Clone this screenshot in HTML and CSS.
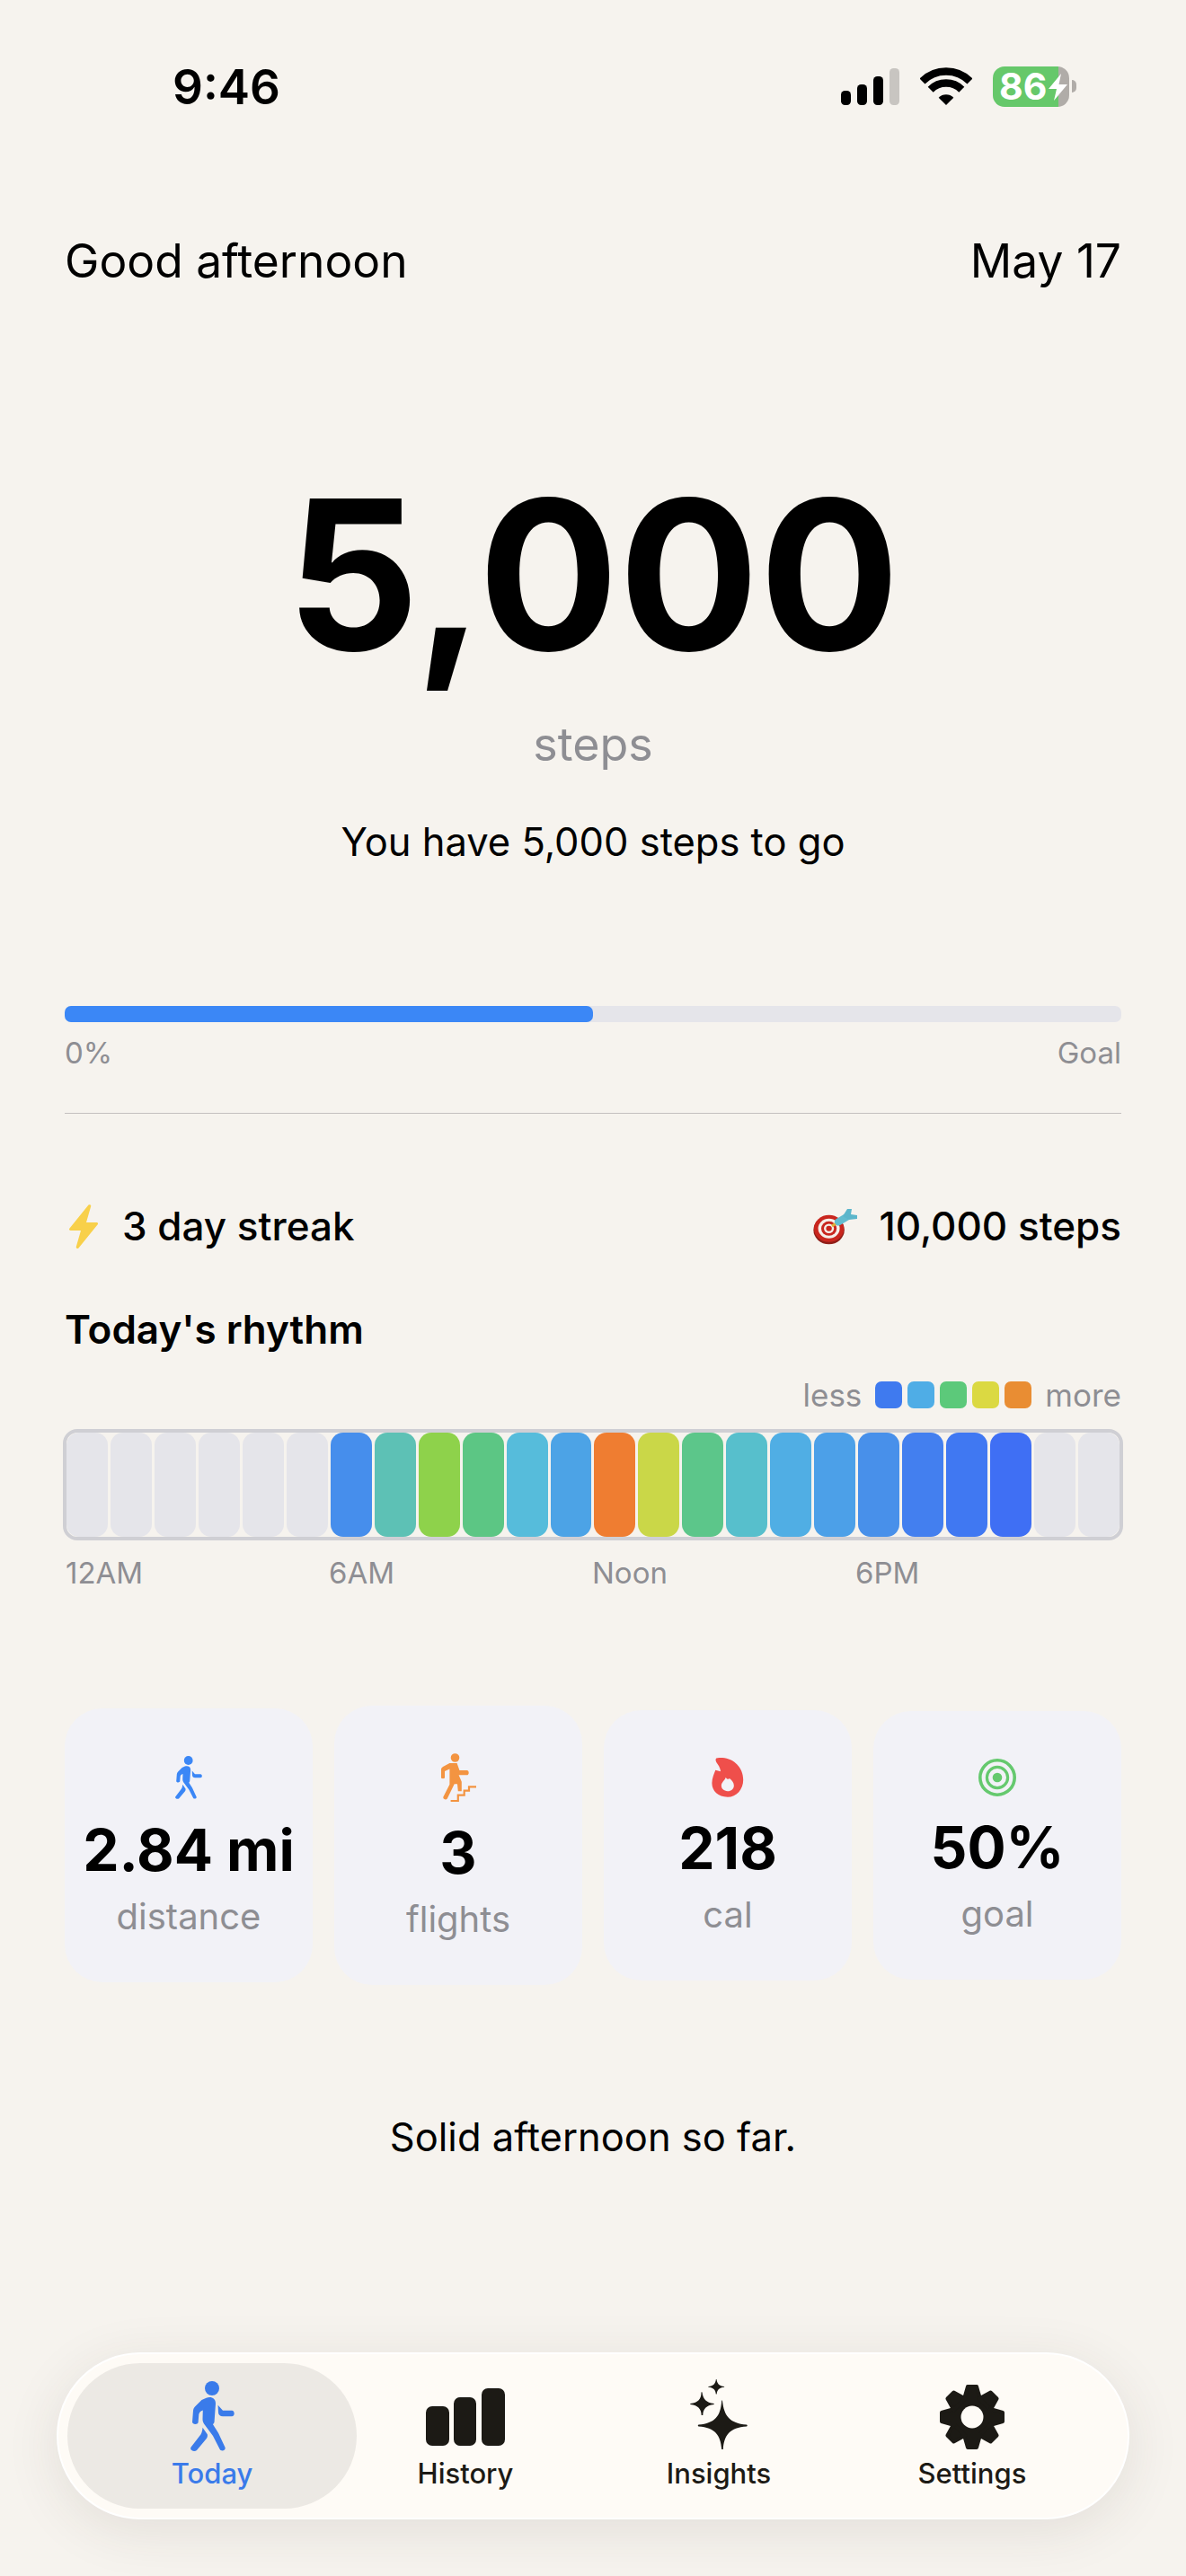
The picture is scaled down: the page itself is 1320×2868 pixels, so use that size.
FILE: index.html
```html
<!DOCTYPE html>
<html>

<head>
    <title>Today</title>
    <meta charset="UTF-8">

    <link rel="stylesheet" href="styles.css">

</head>

<body>
    <svg class="sprites" width="0" height="0">
        <defs>
            <symbol id="walker" viewBox="0 0 49 78">
                <ellipse cx="24" cy="8" rx="8" ry="8" />
                <path d="M17.600 18.700C23 17 28 19 28 25L26.500 46L25 48.300L31 57.700L38.600 74C39.600 77.500 34 78.600 32.700 76L25 61L15 47.500C13.800 45.500 13.500 44 13.500 42L13.800 32.500C11 33 10 35 9.300 37L8.600 46C8.200 48.600 2 48.600 2 45.500L3 33C3.200 31 4 29.600 5.200 28.300L12.500 21Z" />
                <path d="M30.600 26.700L36 32.700H46C49.600 32.800 49.600 39.300 46 39.300H36C33 39.300 31 37.500 31 35Z" />
                <path d="M13.500 51.700L18.800 59.300C19.200 61 18.800 63 17.600 64.300L7 77C4 79.400 -1.600 76.600 .6 73.600L11.400 59.500C12.800 57 13.300 54.500 13.500 51.700Z" />
            </symbol>
        </defs>
    </svg>

    <div class="page">
        <div class="status-bar">
            <span class="clock">9:46</span>
            <div class="status-icons">
                <svg class="signal" width="65" height="41" viewBox="0 0 65 41">
                    <rect x="0" y="25" width="11" height="16" rx="4.500" fill="#000" />
                    <rect x="18" y="18" width="11" height="23" rx="4.500" fill="#000" />
                    <rect x="36" y="9" width="11" height="32" rx="4.500" fill="#000" />
                    <rect x="54" y="0" width="11" height="41" rx="4.500" fill="#c8c5c1" />
                </svg>
                <svg class="wifi" width="58" height="42" viewBox="0 0 58 42">
                    <path d="M2.500 15.500A37.500 37.500 0 0 1 55.500 15.500" fill="none" stroke="#000" stroke-width="8.500" />
                    <path d="M11.700 24.700A24.500 24.500 0 0 1 46.300 24.700" fill="none" stroke="#000" stroke-width="8.500" />
                    <path d="M29 42L20.700 33.700A11.700 11.700 0 0 1 37.300 33.700Z" fill="#000" />
                </svg>
                <div class="battery">
                    <span class="battery-num">86</span>
                    <svg width="21" height="30" viewBox="0 0 21 30">
                        <path d="M14 0L0 17H9L6 30L21 12H11.500Z" fill="#fff" />
                    </svg>
                </div>
                <div class="battery-cap"></div>
            </div>
        </div>

        <div class="top-row">
            <span>Good afternoon</span>
            <span>May 17</span>
        </div>

        <div class="hero">
            <div class="hero-num">5,000</div>
            <div class="hero-unit">steps</div>
            <div class="hero-left">You have 5,000 steps to go</div>
        </div>

        <div class="progress">
            <div class="progress-track">
                <div class="progress-fill" style="width: 50%"></div>
            </div>
            <div class="progress-labels">
                <span>0%</span>
                <span>Goal</span>
            </div>
        </div>

        <div class="divider"></div>

        <div class="streak-row">
            <div class="streak-item">
                <svg class="bolt" width="32" height="49" viewBox="0 0 32 49">
                    <path d="M21.500 .6C22.800 -.4 24.600 .4 24.200 2L19 20H30.500C32 20 32.500 21.600 31.500 22.600L10.500 48.400C9.200 49.600 7.400 48.800 7.800 47L13 29H1.500C0 29 -.5 27.400 .5 26.400Z" fill="#f8d04a" />
                </svg>
                <span>3 day streak</span>
            </div>
            <div class="streak-item">
                <svg class="dart" width="50" height="41" viewBox="0 0 50 41">
                    <ellipse cx="17.600" cy="24.600" rx="17.200" ry="15.600" fill="#8f1d17" />
                    <ellipse cx="17.600" cy="22.800" rx="16.600" ry="15" fill="#c9261e" />
                    <ellipse cx="17.600" cy="22.800" rx="12" ry="11" fill="#f6efe9" />
                    <ellipse cx="17.600" cy="22.800" rx="8.600" ry="8" fill="#c9261e" />
                    <ellipse cx="17.600" cy="22.800" rx="5.600" ry="5.200" fill="#f6efe9" />
                    <ellipse cx="17.600" cy="22.800" rx="3.200" ry="3" fill="#c9261e" />
                    <path d="M21 20L28 15.500" stroke="#e3b23a" stroke-width="3" />
                    <path d="M28 15.500L38 9.500" stroke="#63bccf" stroke-width="8" stroke-linecap="round" />
                    <path d="M33 9L38 1L43 1L42 7L49 8L49 12L40 13Z" fill="#5cb6cb" />
                </svg>
                <span>10,000 steps</span>
            </div>
        </div>

        <div class="rhythm-title">Today's rhythm</div>
        <div class="legend">
            <span>less</span>
            <div class="legend-swatches">
                <i style="background: #3f7aef"></i>
                <i style="background: #4fade6"></i>
                <i style="background: #5cc97a"></i>
                <i style="background: #dbd942"></i>
                <i style="background: #e98d33"></i>
            </div>
            <span>more</span>
        </div>

        <div class="rhythm-bar">
            <i></i><i></i><i></i><i></i><i></i><i></i>
            <i style="background: #468eec"></i>
            <i style="background: #5dc1b5"></i>
            <i style="background: #8ed24b"></i>
            <i style="background: #5cc684"></i>
            <i style="background: #56bcdb"></i>
            <i style="background: #4ca3e6"></i>
            <i style="background: #ef7d31"></i>
            <i style="background: #cad748"></i>
            <i style="background: #5cc68a"></i>
            <i style="background: #57bfcc"></i>
            <i style="background: #50aee4"></i>
            <i style="background: #4ca0e8"></i>
            <i style="background: #4890ea"></i>
            <i style="background: #437fef"></i>
            <i style="background: #4078f2"></i>
            <i style="background: #3f6ff4"></i>
            <i></i><i></i>
        </div>
        <div class="rhythm-labels">
            <span>12AM</span>
            <span>6AM</span>
            <span>Noon</span>
            <span>6PM</span>
        </div>

        <div class="stats">
            <div class="stat">
                <svg class="stat-icon icon-walk" width="30" height="48">
                    <use href="#walker" />
                </svg>
                <div class="stat-value">2.84 mi</div>
                <div class="stat-label">distance</div>
            </div>
            <div class="stat">
                <svg class="stat-icon" width="39" height="54" viewBox="0 0 39 54">
                    <g fill="#f39441">
                        <circle cx="15.500" cy="5" r="4.800" />
                        <path d="M9.400 11H17.600L20.400 19H28.600C31.400 19 31.400 24.300 28.600 24.300H19.600L22.800 31.700V42.300H18.800L18 34.300L14.700 34.300L6.800 50.600C5.400 52.600 1.600 51 2.400 48.600L9.400 34.800V17.500L4 20V27C4 28.600 0 28.600 0 27V18C0 16.800 .8 15.800 2 15Z" />
                    </g>
                    <path d="M10.600 53H18.800V46.700H25.700V41.700H31V37.300H39" fill="none" stroke="#f39441" stroke-width="2.200" />
                </svg>
                <div class="stat-value">3</div>
                <div class="stat-label">flights</div>
            </div>
            <div class="stat">
                <svg class="stat-icon" width="36" height="44" viewBox="0 0 36 45">
                    <path d="M5 .6C7 0 9.500 0 12 0C25 1 35.600 11 35.600 25C35.600 36 28 44.700 17.800 44.700C7 44.700 0 38 0 29C0 23 2.600 18 4 14L9.900 15.500C9.500 11 7 8 5 5C4 3 4 1.400 5 .6Z" fill="#ef4f4b" />
                    <path d="M15.800 22.300C16.600 24.600 19 25 20 23.600C23 26 25 28.600 25 31.600C25 35.400 22 38 17.800 38C13.600 38 10.700 35.400 10.700 31.800C10.700 28 14.600 26 15.800 22.300Z" fill="#f2f2f7" />
                </svg>
                <div class="stat-value">218</div>
                <div class="stat-label">cal</div>
            </div>
            <div class="stat">
                <svg class="stat-icon" width="42" height="42" viewBox="0 0 42 42">
                    <circle cx="21" cy="21" r="19.200" fill="none" stroke="#65c96e" stroke-width="3.600" />
                    <circle cx="21" cy="21" r="11.600" fill="none" stroke="#65c96e" stroke-width="3.200" />
                    <circle cx="21" cy="21" r="5.300" fill="#65c96e" />
                </svg>
                <div class="stat-value">50%</div>
                <div class="stat-label">goal</div>
            </div>
        </div>

        <div class="message">Solid afternoon so far.</div>

        <div class="tab-bar">
            <div class="tab tab-active">
                <svg class="tab-icon" width="49" height="78">
                    <use href="#walker" />
                </svg>
                <span>Today</span>
            </div>
            <div class="tab">
                <svg class="tab-icon" width="88" height="78" viewBox="0 -10 88 78">
                    <rect x="0" y="20" width="26" height="44" rx="7" />
                    <rect x="31" y="10" width="25" height="54" rx="7" />
                    <rect x="62" y="0" width="26" height="64" rx="7" />
                </svg>
                <span>History</span>
            </div>
            <div class="tab">
                <svg class="tab-icon" width="64" height="78" viewBox="0 0 64 78">
                    <path d="M36 24C38 41 44 49 63 50.500C64 51 64 52 63 52.500C44 54 38 62 36.800 78H35.200C34 62 28 54 9.500 52.500C8.500 52 8.500 51 9.500 50.500C28 49 34 41 35.200 24C35.500 23 35.800 23 36 24Z" />
                    <path d="M13.500 14.500C14.500 22 18 26 26.500 27C27 27.300 27 27.700 26.500 28C18 29 14.500 33 14.300 40H12.700C12.500 33 9 29 .5 28C0 27.700 0 27.300 .5 27C9 26 12.500 22 12.500 14.500C12.800 14 13.200 14 13.500 14.500Z" />
                    <path d="M29.500 0C30.200 5 32.500 7.500 38 8C38.300 8.200 38.300 8.500 38 8.700C32.500 9.300 30.200 11.500 29.700 16.500H28.800C28.300 11.500 26 9.300 20.500 8.700C20.200 8.500 20.200 8.200 20.500 8C26 7.500 28.300 5 28.900 0C29.100 -.2 29.300 -.2 29.500 0Z" />
                </svg>
                <span>Insights</span>
            </div>
            <div class="tab">
                <svg class="tab-icon" width="72" height="78" viewBox="-36 -42 72 78">
                    <g>
                        <circle r="26" />
                        <path id="tooth" d="M-5 -34H5L9 -20H-9Z" stroke="#1c1a15" stroke-width="4" stroke-linejoin="round" />
                        <use href="#tooth" transform="rotate(45)" />
                        <use href="#tooth" transform="rotate(90)" />
                        <use href="#tooth" transform="rotate(135)" />
                        <use href="#tooth" transform="rotate(180)" />
                        <use href="#tooth" transform="rotate(225)" />
                        <use href="#tooth" transform="rotate(270)" />
                        <use href="#tooth" transform="rotate(315)" />
                    </g>
                    <circle r="12.500" fill="#fefbf6" />
                </svg>
                <span>Settings</span>
            </div>
        </div>
    </div>
</body>

</html>
```

FILE: styles.css
```css
body {
    font-family: Inter, "Liberation Sans", sans-serif;
    margin: 0;
    background-color: #f6f3ee;
    color: #000;
}

.sprites {
    position: absolute;
}

.page {
    position: relative;
    height: 2868px;
    padding: 0 72px;
    box-sizing: border-box;
    overflow: hidden;
}

/* status bar */
.status-bar {
    display: flex;
    justify-content: space-between;
    align-items: flex-start;
    height: 120px;
    padding: 66px 50px 0 120px;
    box-sizing: border-box;
}

.clock {
    font-size: 53px;
    line-height: 63px;
    font-weight: 600;
}

.status-icons {
    display: flex;
    align-items: flex-end;
    margin-top: 8px;
}

.wifi {
    margin-left: 23px;
}

.battery {
    display: flex;
    align-items: center;
    width: 85px;
    height: 45px;
    margin-left: 23px;
    margin-bottom: -2px;
    padding-left: 7px;
    box-sizing: border-box;
    border-radius: 13px;
    background: linear-gradient(to right, #66c86a 73px, #b0aca8 73px);
    color: #fff;
}

.battery-num {
    font-size: 41px;
    line-height: 45px;
    font-weight: 700;
    margin-right: 2px;
}

.battery-cap {
    width: 5px;
    height: 14px;
    margin: 0 0 14px 3px;
    border-radius: 0 5px 5px 0;
    background-color: #b0aca8;
}

/* greeting */
.top-row {
    display: flex;
    justify-content: space-between;
    margin-top: 139px;
    font-size: 51.500px;
    line-height: 62px;
}

/* big number */
.hero {
    text-align: center;
}

.hero-num {
    margin-top: 174px;
    font-size: 232px;
    line-height: 290px;
    font-weight: 700;
}

.hero-unit {
    margin-top: 11px;
    font-size: 52px;
    line-height: 66px;
    color: #8e8e93;
}

.hero-left {
    margin-top: 47px;
    font-size: 43.500px;
    line-height: 56px;
}

/* progress */
.progress {
    margin-top: 155px;
}

.progress-track {
    height: 18px;
    border-radius: 7px;
    background-color: #e5e5ea;
}

.progress-fill {
    height: 100%;
    border-radius: 7px;
    background-color: #3b87f6;
}

.progress-labels {
    display: flex;
    justify-content: space-between;
    margin-top: 14px;
    font-size: 33px;
    line-height: 40px;
    color: #8e8e93;
}

.divider {
    height: 1px;
    margin-top: 47px;
    background-color: #c4c0bf;
}

/* streak and goal */
.streak-row {
    display: flex;
    justify-content: space-between;
    align-items: center;
    margin-top: 97px;
    font-size: 44px;
    line-height: 56px;
    font-weight: 500;
}

.streak-item {
    display: flex;
    align-items: center;
}

.bolt {
    margin: 0 27px 0 5px;
}

.dart {
    margin-right: 23px;
}

/* rhythm */
.rhythm-title {
    margin-top: 59px;
    font-size: 44px;
    line-height: 56px;
    font-weight: 600;
}

.legend {
    display: flex;
    justify-content: flex-end;
    align-items: center;
    gap: 15px;
    margin-top: 23px;
    font-size: 35px;
    line-height: 44px;
    color: #8e8e93;
}

.legend-swatches {
    display: flex;
    gap: 6px;
}

.legend-swatches i {
    width: 30px;
    height: 30px;
    border-radius: 7px;
}

.rhythm-bar {
    display: grid;
    grid-template-columns: repeat(24, 1fr);
    gap: 3px;
    height: 124px;
    margin: 16px -2px 0;
    border: 4px solid #cfcfd4;
    border-radius: 16px;
    box-sizing: border-box;
    overflow: hidden;
}

.rhythm-bar i {
    border-radius: 14px;
    background-color: #e5e5ea;
}

.rhythm-labels {
    display: grid;
    grid-template-columns: repeat(4, 293px);
    margin-top: 16px;
    padding-left: 1px;
    font-size: 33px;
    line-height: 40px;
    color: #8e8e93;
}

/* stat cards */
.stats {
    display: grid;
    grid-template-columns: repeat(4, 1fr);
    align-items: center;
    gap: 24px;
    margin-top: 128px;
}

.stat {
    display: flex;
    flex-direction: column;
    align-items: center;
    padding: 53px 0 48px;
    border-radius: 42px;
    background-color: #f2f2f7;
}

.stat-icon {
    margin-bottom: 19px;
}

.icon-walk {
    fill: #3b87f6;
}

.stat-value {
    font-size: 64px;
    line-height: 76px;
    font-weight: 700;
    white-space: nowrap;
}

.stat-label {
    margin-top: 11px;
    font-size: 40px;
    line-height: 50px;
    color: #8e8e93;
}

.message {
    margin-top: 141px;
    text-align: center;
    font-size: 43.500px;
    line-height: 56px;
}

/* bottom tabs, floating over the page */
.tab-bar {
    position: absolute;
    left: 63px;
    top: 2619px;
    display: flex;
    width: 1194px;
    height: 186px;
    padding: 0 32px 0 30px;
    box-sizing: border-box;
    border: 2px solid #fff;
    border-radius: 93px;
    background-color: #fefbf6;
    box-shadow: 0 12px 60px rgba(60, 50, 40, 0.1);
}

.tab {
    position: relative;
    flex: 1;
    display: flex;
    flex-direction: column;
    align-items: center;
    padding-top: 28px;
    fill: #1c1a15;
    color: #1c1a15;
    font-size: 31px;
    line-height: 40px;
    font-weight: 500;
}

.tab span,
.tab svg {
    position: relative;
}

.tab-icon {
    margin-bottom: 7px;
}

.tab-active {
    fill: #3a7bea;
    color: #3a7bea;
}

.tab-active .tab-icon {
    margin-top: 2px;
    margin-bottom: 5px;
}

.tab-active::before {
    content: "";
    position: absolute;
    top: 10px;
    bottom: 10px;
    left: -20px;
    right: -20px;
    border-radius: 81px;
    background-color: #ece9e4;
}
```
